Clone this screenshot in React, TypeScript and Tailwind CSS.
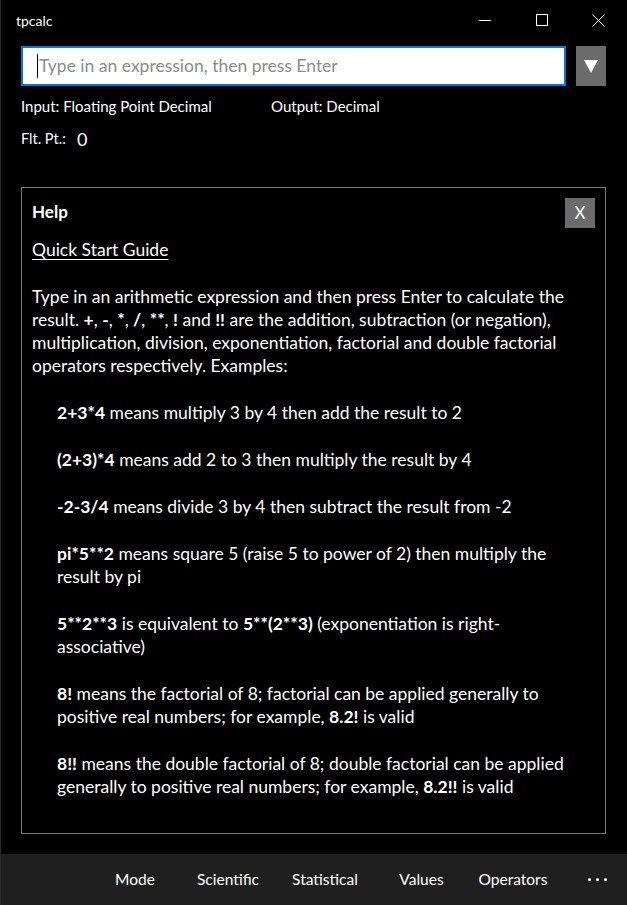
import React from "react";

const navItems = [
    { label: "Mode", w: "w-[90px]" },
    { label: "Scientific", w: "w-[96px]" },
    { label: "Statistical", w: "w-[98px]" },
    { label: "Values", w: "w-[95px]" },
    { label: "Operators", w: "w-[88px]" },
];

function Example({ children }: { children: React.ReactNode }) {
    return <p className="ml-[25px] mt-[24px]">{children}</p>;
}

export default function App() {
    return (
        <div
            className="w-[627px] h-[905px] bg-black text-white flex flex-col border-l border-[#2a2a2a] overflow-hidden"
            style={{ fontFamily: "Lato, 'Noto Sans', sans-serif" }}
        >
            {/* Title bar */}
            <div className="h-[40px] flex items-center relative">
                <span className="ml-[15px] text-[14px] text-white">tpcalc</span>
                <div className="ml-auto flex items-center h-full">
                    <div className="w-[57px] h-full flex items-center justify-center">
                        <svg width="12" height="12" viewBox="0 0 12 12">
                            <line x1="0" y1="6.5" x2="12" y2="6.5" stroke="white" strokeWidth="1" />
                        </svg>
                    </div>
                    <div className="w-[57px] h-full flex items-center justify-center">
                        <svg width="12" height="12" viewBox="0 0 12 12">
                            <rect x="0.5" y="0.5" width="11" height="11" fill="none" stroke="white" strokeWidth="1" />
                        </svg>
                    </div>
                    <div className="w-[57px] h-full flex items-center justify-center">
                        <svg width="13" height="13" viewBox="0 0 13 13">
                            <path d="M0.5 0.5 L12.5 12.5 M12.5 0.5 L0.5 12.5" stroke="white" strokeWidth="1" />
                        </svg>
                    </div>
                </div>
            </div>

            {/* Expression input */}
            <div className="mt-[6px] ml-[20px] flex items-stretch h-[40px]">
                <div className="w-[545px] border-2 border-[#0078d7] bg-white flex items-center pl-[14px]">
                    <div className="w-px h-[24px] bg-black" />
                    <span className="text-[17.5px] text-[#8c8c8c] ml-[1px]">Type in an expression, then press Enter</span>
                </div>
                <button className="ml-[10px] w-[30px] bg-[#6b6b6b] flex items-center justify-center">
                    <svg width="14" height="13" viewBox="0 0 14 13">
                        <polygon points="0,0 14,0 7,13" fill="white" />
                    </svg>
                </button>
            </div>

            {/* Modes */}
            <div className="mt-[10px] ml-[20px] flex text-[15px] leading-[20px]">
                <span className="w-[250px]">Input: Floating Point Decimal</span>
                <span>Output: Decimal</span>
            </div>
            <div className="mt-[13px] ml-[20px] flex items-center text-[14.5px] leading-[20px]">
                <span className="w-[56px]">Flt. Pt.:</span>
                <span className="text-[18px]">0</span>
            </div>

            {/* Help panel */}
            <div className="mt-[38px] ml-[20px] w-[585px] h-[647px] border border-[#7a7a7a] pl-[10px] pr-[10px] pt-[10px]">
                <div className="flex items-center justify-between">
                    <h2 className="text-[17px] font-bold -mt-[2px]">Help</h2>
                    <button className="w-[30px] h-[30px] bg-[#6b6b6b] text-white text-[17px] flex items-center justify-center">
                        X
                    </button>
                </div>
                <div className="text-[17.5px] leading-[23px]">
                    <p className="mt-[10px]">
                        <span className="underline underline-offset-[3px]">Quick Start Guide</span>
                    </p>
                    <p className="mt-[24px]">
                        Type in an arithmetic expression and then press Enter to calculate the
                        <br />
                        result. <b>+</b>, <b>-</b>, <b>*</b>, <b>/</b>, <b>**</b>, <b>!</b> and <b>!!</b> are the
                        addition, subtraction (or negation),
                        <br />
                        multiplication, division, exponentiation, factorial and double factorial
                        <br />
                        operators respectively. Examples:
                    </p>
                    <Example>
                        <b>2+3*4</b> means multiply 3 by 4 then add the result to 2
                    </Example>
                    <Example>
                        <b>(2+3)*4</b> means add 2 to 3 then multiply the result by 4
                    </Example>
                    <Example>
                        <b>-2-3/4</b> means divide 3 by 4 then subtract the result from -2
                    </Example>
                    <Example>
                        <b>pi*5**2</b> means square 5 (raise 5 to power of 2) then multiply the
                        <br />
                        result by pi
                    </Example>
                    <Example>
                        <b>5**2**3</b> is equivalent to <b>5**(2**3)</b> (exponentiation is right-
                        <br />
                        associative)
                    </Example>
                    <Example>
                        <b>8!</b> means the factorial of 8; factorial can be applied generally to
                        <br />
                        positive real numbers; for example, <b>8.2!</b> is valid
                    </Example>
                    <Example>
                        <b>8!!</b> means the double factorial of 8; double factorial can be applied
                        <br />
                        generally to positive real numbers; for example, <b>8.2!!</b> is valid
                    </Example>
                </div>
            </div>

            {/* Bottom command bar */}
            <div className="mt-auto h-[51px] bg-[#1f1f1f] flex items-center pl-[89px] text-[15.5px]">
                {navItems.map((item) => (
                    <span key={item.label} className={`${item.w} text-center`}>
                        {item.label}
                    </span>
                ))}
                <span className="ml-[31px] flex gap-[5px] items-center">
                    <span className="w-[3px] h-[3px] bg-white rounded-full" />
                    <span className="w-[3px] h-[3px] bg-white rounded-full" />
                    <span className="w-[3px] h-[3px] bg-white rounded-full" />
                </span>
            </div>
        </div>
    );
}
